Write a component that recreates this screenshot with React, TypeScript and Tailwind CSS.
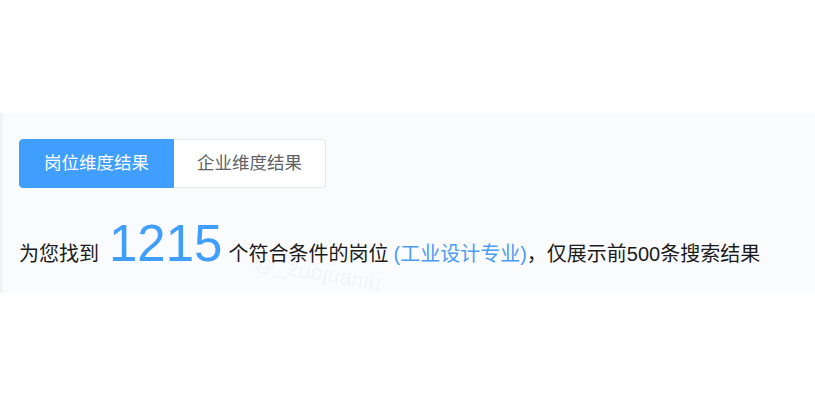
import React from 'react';

// Search result summary: dimension tabs + count line

const tabs = [
  { key: 'job', label: '岗位维度结果' },
  { key: 'company', label: '企业维度结果' },
];

export default function App() {
  const active = 'job';

  return (
    <div
      className="w-[815px] h-[407px] bg-white pt-[113px]"
      style={{ fontFamily: '"Liberation Sans", "Noto Sans CJK SC", sans-serif' }}
    >
      <div className="relative overflow-hidden h-[180px] bg-[#fafbfd] border-l-[3px] border-[#f2f3f5] pl-4 pt-[26px]">
        {/* Tabs */}
        <div className="flex">
          {tabs.map((t) => (
            <button
              key={t.key}
              className={
                t.key === active
                  ? 'w-[155px] h-[49px] bg-[#409eff] text-white text-[17.5px] rounded-l-[4px] border border-[#409eff]'
                  : 'w-[152px] h-[49px] bg-white text-[#606266] text-[17.5px] rounded-r-[4px] border border-l-0 border-[#e4e7ed]'
              }
            >
              {t.label}
            </button>
          ))}
        </div>

        {/* Count line */}
        <div className="relative z-10 flex items-baseline mt-[30px] text-[20px] text-[#1a1a1a]">
          <span>为您找到</span>
          <span className="text-[51px] leading-none text-[#409eff] ml-[10px] mr-[6px]">1215</span>
          <span>个符合条件的岗位</span>
          <span className="text-[#4d9cf6] ml-[5px]">(工业设计专业)</span>
          <span>，仅展示前500条搜索结果</span>
        </div>

        {/* watermark */}
        <div className="absolute left-[250px] top-[143px] rotate-[10deg] text-[22px] text-black/[0.05] pointer-events-none whitespace-nowrap">
          @_zuojuaniu
        </div>
      </div>
    </div>
  );
}
